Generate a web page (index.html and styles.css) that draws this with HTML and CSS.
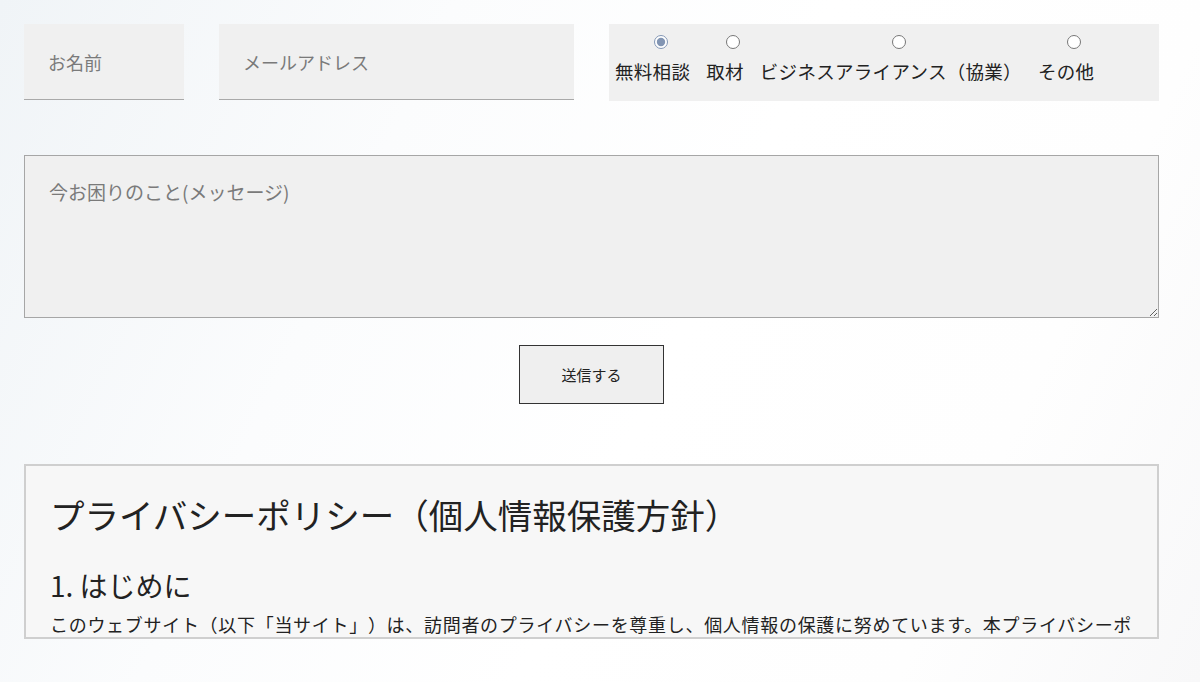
FILE: index.html
```html
<!DOCTYPE html>
<html lang="ja">
<head>
    <meta charset="UTF-8">
    <meta name="viewport" content="width=device-width, initial-scale=1.0">
    <title>お問い合わせ</title>
    <link rel="stylesheet" href="styles.css">
</head>
<body>
    <div class="contact">
        <form class="contact-form" onsubmit="return false">
            <div class="form-row">
                <input class="field field-name" type="text" placeholder="お名前">
                <input class="field field-mail" type="email" placeholder="メールアドレス">
                <div class="type-group">
                    <label class="type-option"><input type="radio" name="type" checked><span>無料相談</span></label>
                    <label class="type-option"><input type="radio" name="type"><span>取材</span></label>
                    <label class="type-option"><input type="radio" name="type"><span>ビジネスアライアンス（協業）</span></label>
                    <label class="type-option"><input type="radio" name="type"><span>その他</span></label>
                </div>
            </div>
            <textarea class="message" placeholder="今お困りのこと(メッセージ)"></textarea>
            <div class="submit-row">
                <button class="submit" type="submit">送信する</button>
            </div>
        </form>

        <div class="policy">
            <h1>プライバシーポリシー（個人情報保護方針）</h1>
            <h2>1. はじめに</h2>
            <p>このウェブサイト（以下「当サイト」）は、訪問者のプライバシーを尊重し、個人情報の保護に努めています。本プライバシーポ</p>
        </div>
    </div>
</body>
</html>
```

FILE: styles.css
```css
body{
    margin: 0;
    min-height: 682px;
    font-family: "Noto Sans CJK JP", "Noto Sans", sans-serif;
    color: #222;
    text-spacing-trim: space-all;
    background: linear-gradient(115deg, #f0f4f7 0%, #fbfcfd 30%, #ffffff 55%, #fefefe 80%, #f8f8f9 100%);
}
.contact{
    width: 1135px;
    margin-left: 24px;
    padding-top: 24px;
}
.form-row{
    display: flex;
    gap: 35px;
}
.field{
    box-sizing: border-box;
    height: 76px;
    padding: 0 24px;
    border: none;
    border-bottom: 1px solid #a9a9a9;
    background-color: #f0f0f0;
    font-family: inherit;
    font-size: 18px;
    color: #333;
    outline: none;
}
.field::placeholder, .message::placeholder{
    color: #7a7a7a;
}
.field-name{
    width: 160px;
}
.field-mail{
    width: 355px;
}
.type-group{
    box-sizing: border-box;
    width: 550px;
    height: 77px;
    padding: 11px 6px 0;
    background-color: #f0f0f0;
    display: flex;
    align-items: flex-start;
    gap: 0;
}
.type-option{
    display: flex;
    flex-direction: column;
    align-items: center;
    font-size: 18.5px;
    letter-spacing: 0.3px;
    color: #222;
}
.type-option input{
    width: 14px;
    height: 14px;
    margin: 0;
    accent-color: #8295b3;
}
.type-option span{
    padding-right: 16px;
    line-height: 28px;
    margin-top: 8px;
    white-space: nowrap;
}
.message{
    display: block;
    box-sizing: border-box;
    width: 100%;
    height: 163px;
    margin-top: 54px;
    padding: 22px 24px;
    border: 1px solid #a6a6a6;
    background-color: #f0f0f0;
    font-family: inherit;
    font-size: 19px;
    outline: none;
}
.submit-row{
    display: flex;
    justify-content: center;
    margin-top: 27px;
}
.submit{
    width: 145px;
    height: 59px;
    border: 1px solid #333;
    background-color: #efefef;
    font-family: inherit;
    font-size: 15px;
    color: #222;
}
.policy{
    box-sizing: border-box;
    height: 175px;
    margin-top: 60px;
    padding: 23px 25px 0 24px;
    border: 2px solid #cfcfcf;
    background-color: #f7f7f7;
    overflow: hidden;
}
.policy h1{
    margin: 0;
    font-size: 34.5px;
    font-weight: 400;
    line-height: 50px;
    white-space: nowrap;
}
.policy h2{
    margin: 26px 0 0;
    font-size: 28px;
    font-weight: 400;
    line-height: 40px;
}
.policy p{
    margin: 3px 0 0;
    font-size: 18px;
    letter-spacing: 0.7px;
    line-height: 32px;
    white-space: nowrap;
}
```
